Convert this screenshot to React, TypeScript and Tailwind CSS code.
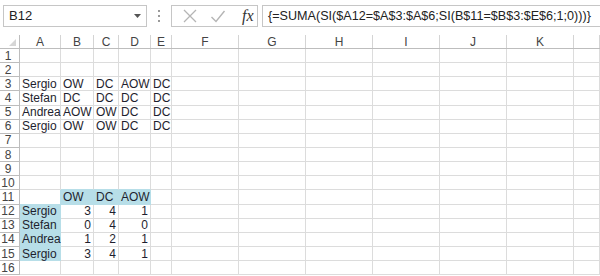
const COLS = ['A', 'B', 'C', 'D', 'E', 'F', 'G', 'H', 'I', 'J', 'K', 'L'];

type Cell = { v: string; num?: boolean };

const DATA: Record<number, Record<string, Cell>> = {
  3: { A: { v: 'Sergio' }, B: { v: 'OW' }, C: { v: 'DC' }, D: { v: 'AOW' }, E: { v: 'DC' } },
  4: { A: { v: 'Stefan' }, B: { v: 'DC' }, C: { v: 'DC' }, D: { v: 'DC' }, E: { v: 'DC' } },
  5: { A: { v: 'Andrea' }, B: { v: 'AOW' }, C: { v: 'OW' }, D: { v: 'DC' }, E: { v: 'DC' } },
  6: { A: { v: 'Sergio' }, B: { v: 'OW' }, C: { v: 'OW' }, D: { v: 'DC' }, E: { v: 'DC' } },
  11: { B: { v: 'OW' }, C: { v: 'DC' }, D: { v: 'AOW' } },
  12: { A: { v: 'Sergio' }, B: { v: '3', num: true }, C: { v: '4', num: true }, D: { v: '1', num: true } },
  13: { A: { v: 'Stefan' }, B: { v: '0', num: true }, C: { v: '4', num: true }, D: { v: '0', num: true } },
  14: { A: { v: 'Andrea' }, B: { v: '1', num: true }, C: { v: '2', num: true }, D: { v: '1', num: true } },
  15: { A: { v: 'Sergio' }, B: { v: '3', num: true }, C: { v: '4', num: true }, D: { v: '1', num: true } },
};

function filled(r: number, c: string) {
  if (r === 11 && (c === 'B' || c === 'C' || c === 'D')) return true;
  if (r >= 12 && r <= 15 && c === 'A') return true;
  return false;
}

const ROWS = Array.from({ length: 16 }, (_, i) => i + 1);
const GRID = 'grid grid-cols-[20px_41px_33px_25px_32px_21px_67px_67px_67px_67px_67px_67px_1fr]';

function FormulaBar() {
  return (
    <div className="flex h-[35px] items-start pt-[5px] pl-[3px]">
      <div className="flex h-[22px] w-[144px] items-center justify-between border border-[#c6c6c6] bg-white pl-[5px] pr-[5px]">
        <span className="text-[13px] text-[#222]">B12</span>
        <svg width="7" height="4" viewBox="0 0 7 4">
          <path d="M0 0 H7 L3.5 4 Z" fill="#555" />
        </svg>
      </div>
      <div className="ml-[11px] mr-[11px] flex h-[22px] flex-col items-center justify-center gap-[3px]">
        <span className="h-[2px] w-[2px] bg-[#9a9a9a]" />
        <span className="h-[2px] w-[2px] bg-[#9a9a9a]" />
        <span className="h-[2px] w-[2px] bg-[#9a9a9a]" />
      </div>
      <div className="flex h-[22px] w-[87px] items-center border border-[#c6c6c6] bg-white">
        <svg className="ml-[10px]" width="16" height="16" viewBox="0 0 16 16">
          <path d="M2 2 L14 14 M14 2 L2 14" stroke="#b5b5b5" strokeWidth="1.3" fill="none" />
        </svg>
        <svg className="ml-[12px]" width="16" height="16" viewBox="0 0 16 16">
          <path d="M1.5 9 L6 13.5 L14.5 3" stroke="#b5b5b5" strokeWidth="1.4" fill="none" />
        </svg>
        <span className="ml-[16px] text-[16px] italic leading-none text-[#333]" style={{ fontFamily: '"Liberation Serif", serif' }}>
          fx
        </span>
      </div>
      <div className="ml-[4px] flex h-[22px] flex-1 items-center border border-r-0 border-[#c6c6c6] bg-white pl-[5px]">
        <span className="whitespace-nowrap text-[12.6px] text-[#222]">{'{=SUMA(SI($A12=$A$3:$A$6;SI(B$11=$B$3:$E$6;1;0)))}'}</span>
      </div>
    </div>
  );
}

function Header() {
  return (
    <div className={`${GRID} h-[14px] border-b border-[#bdbdbd]`}>
      <div className="relative border-r border-[#bdbdbd]">
        <svg className="absolute bottom-[2px] right-[3px]" width="7" height="7" viewBox="0 0 7 7">
          <path d="M7 0 V7 H0 Z" fill="#d6d6d6" />
        </svg>
      </div>
      {COLS.map((c) => (
        <div key={c} className="flex items-center justify-center border-r border-[#d4d4d4] text-[12px] leading-none text-[#444]">
          {c === 'L' ? '' : c}
        </div>
      ))}
    </div>
  );
}

function Row({ r }: { r: number }) {
  return (
    <div className={`${GRID} h-[14.15px]`}>
      <div className="flex items-center justify-center border-r border-b border-[#bdbdbd] pr-[3px] text-[12px] leading-none text-[#444]">
        {r}
      </div>
      {COLS.map((c, i) => {
        const cell = DATA[r]?.[c];
        const f = filled(r, c);
        const next = COLS[i + 1];
        const rightFill = f || (next ? filled(r, next) : false);
        const bottomFill = f || filled(r + 1, c);
        return (
          <div
            key={c}
            className={`flex items-center overflow-visible whitespace-nowrap border-r border-b px-[2px] text-[12px] leading-none text-[#1e1e2e] ${
              cell?.num ? 'justify-end' : 'justify-start'
            } ${f ? 'bg-[#b7dee8]' : 'bg-white'} ${rightFill ? 'border-r-[#b7dee8]' : 'border-r-[#dcdcdc]'} ${
              bottomFill ? 'border-b-[#b7dee8]' : 'border-b-[#dcdcdc]'
            }`}
          >
            {cell?.v}
          </div>
        );
      })}
    </div>
  );
}

export default function App() {
  return (
    <div className="h-[276px] w-[600px] overflow-hidden bg-white" style={{ fontFamily: '"Liberation Sans", Arial, sans-serif' }}>
      <FormulaBar />
      <Header />
      {ROWS.map((r) => (
        <Row key={r} r={r} />
      ))}
    </div>
  );
}
